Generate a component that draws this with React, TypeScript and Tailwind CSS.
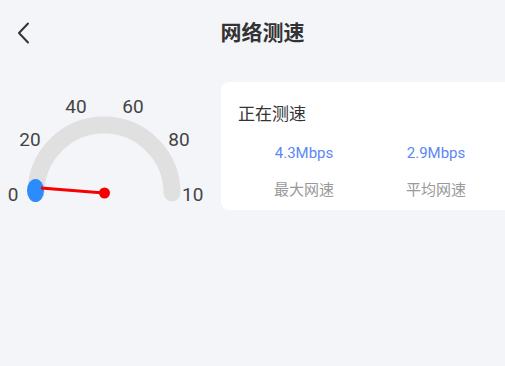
const cjk = { fontFamily: '"Noto Sans CJK SC", "Noto Sans", sans-serif' }
const num = { fontFamily: 'Roboto, "Noto Sans CJK SC", sans-serif' }

function Gauge() {
  return (
    <svg width="221" height="128" viewBox="0 82 221 128" className="shrink-0">
      <path
        d="M36 193 A68 68 0 0 1 172 193"
        fill="none"
        stroke="#e0e0e0"
        strokeWidth="17"
        strokeLinecap="round"
      />
      <g fill="#444" fontSize="19" style={num}>
        <text x="13" y="201" textAnchor="middle">0</text>
        <text x="30" y="146" textAnchor="middle">20</text>
        <text x="76" y="113" textAnchor="middle">40</text>
        <text x="133" y="113" textAnchor="middle">60</text>
        <text x="179" y="146" textAnchor="middle">80</text>
        <text x="182" y="201">10</text>
      </g>
      <ellipse cx="35.5" cy="190.5" rx="8.5" ry="11.5" fill="#2d8cfb" />
      <line x1="41" y1="188" x2="104" y2="193" stroke="#f90000" strokeWidth="3" />
      <circle cx="104.5" cy="193" r="5.5" fill="#f90000" />
    </svg>
  )
}

export default function App() {
  return (
    <div className="w-full h-[366px] bg-[#f4f5f9] overflow-hidden" style={cjk}>
      {/* Header */}
      <div className="relative h-[66px] flex items-center justify-center pl-[20px]">
        <svg className="absolute left-[16px] top-[21px]" width="16" height="24" viewBox="0 0 16 24">
          <path d="M12 2.5 L3 12 L12 21.5" fill="none" stroke="#333" strokeWidth="2" strokeLinecap="round" strokeLinejoin="round" />
        </svg>
        <h1 className="relative -top-[2px] text-[21px] font-bold text-[#333] leading-none">网络测速</h1>
      </div>

      <div className="pt-[16px] flex items-start">
        <Gauge />
        <div className="shrink-0 w-[428px] bg-white rounded-[8px] pl-[17px] pt-[19px] pb-[11px]">
          <div className="text-[17px] leading-[24px] text-[#333]">正在测速</div>
          <div className="mt-[18px] flex">
            <div className="w-[132px] text-center text-[15px] leading-[20px] text-[#5b87f7]" style={num}>4.3Mbps</div>
            <div className="w-[132px] text-center text-[15px] leading-[20px] text-[#5b87f7]" style={num}>2.9Mbps</div>
          </div>
          <div className="mt-[16px] flex">
            <div className="w-[132px] text-center text-[15px] leading-[20px] text-[#999]">最大网速</div>
            <div className="w-[132px] text-center text-[15px] leading-[20px] text-[#999]">平均网速</div>
          </div>
        </div>
      </div>
    </div>
  )
}
